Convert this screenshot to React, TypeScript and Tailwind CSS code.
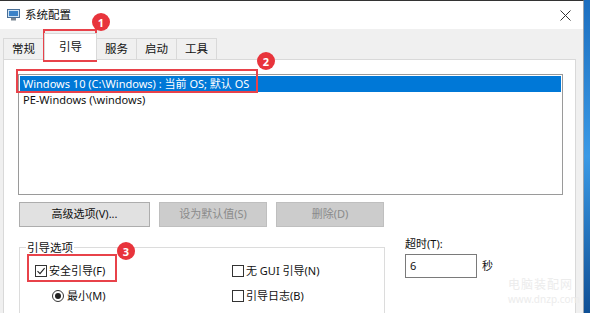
import React from "react"

const font = { fontFamily: '"Noto Sans", "Noto Sans CJK SC", sans-serif' }

const Badge = ({ n, className }: { n: string; className: string }) => (
  <div className={"absolute w-[18px] h-[18px] rounded-full bg-[#e8343c] text-white text-[11px] font-bold flex items-center justify-center leading-none " + className}>
    {n}
  </div>
)

const Check = ({ checked }: { checked?: boolean }) => (
  <div className="w-[12px] h-[12px] border border-[#333] bg-white flex items-center justify-center">
    {checked && (
      <svg width="10" height="10" viewBox="0 0 10 10">
        <path d="M1.5 5.2 L4 7.6 L8.6 2.2" fill="none" stroke="#222" strokeWidth="1.1" />
      </svg>
    )}
  </div>
)

const Radio = ({ on }: { on?: boolean }) => (
  <div className="w-[12px] h-[12px] rounded-full border border-[#333] bg-white flex items-center justify-center">
    {on && <div className="w-[6px] h-[6px] rounded-full bg-[#222]" />}
  </div>
)

const Tab = ({ label, active }: { label: string; active?: boolean }) =>
  active ? (
    <div className="h-[27px] -mb-px px-[14px] bg-white border border-b-0 border-[#d9d9d9] flex items-center text-[11.5px] text-[#111] relative z-10">
      {label}
    </div>
  ) : (
    <div className="h-[21px] px-[8px] border border-b-0 border-l-0 first:border-l border-[#d9d9d9] flex items-center text-[11.5px] text-[#111]">
      {label}
    </div>
  )

export default function App() {
  return (
    <div className="w-[590px] h-[313px] overflow-hidden relative flex bg-white text-[11px]" style={font}>
      <div className="w-[584px] flex flex-col border-t border-[#333] border-r border-r-[#9aa4b0]">
        {/* title bar */}
        <div className="h-[28px] bg-white flex items-center pl-[7px] pr-[12px] shrink-0">
          <svg width="13" height="12" viewBox="0 0 13 12">
            <rect x="0.5" y="0.5" width="12" height="8" fill="#cfe3f5" stroke="#4a6f96" />
            <rect x="2" y="2" width="9" height="5" fill="#3b82c8" />
            <rect x="4" y="9" width="5" height="2.5" fill="#7a8794" />
          </svg>
          <span className="ml-[5px] text-[11.5px] text-[#111]">系统配置</span>
          <div className="flex-1" />
          <svg width="11" height="11" viewBox="0 0 11 11">
            <path d="M0.5 0.5 L10.5 10.5 M10.5 0.5 L0.5 10.5" stroke="#333" strokeWidth="1" />
          </svg>
        </div>

        {/* body */}
        <div className="flex-1 bg-[#f0f0f0] flex flex-col pl-[3px] pr-[7px]">
          <div className="h-[30px] flex items-end shrink-0">
            <Tab label="常规" />
            <Tab label="引导" active />
            <Tab label="服务" />
            <Tab label="启动" />
            <Tab label="工具" />
          </div>
          <div className="flex-1 bg-white border border-[#d9d9d9] pl-[14px] pr-[12px] pt-[14px] flex flex-col">
            {/* list */}
            <div className="h-[121px] border border-[#9a9a9a] bg-white p-px">
              <div className="h-[16px] bg-[#0078d7] text-white flex items-center pl-[3px]">
                Windows 10 (C:\Windows) : 当前 OS; 默认 OS
              </div>
              <div className="h-[16px] text-[#111] flex items-center pl-[3px]">PE-Windows (\windows)</div>
            </div>

            {/* buttons */}
            <div className="flex gap-[9px] mt-[7px] pl-[1px]">
              <div className="w-[131px] h-[25px] bg-[#e1e1e1] border border-[#adadad] flex items-center justify-center text-[#111]">
                高级选项(V)...
              </div>
              <div className="w-[108px] h-[25px] bg-[#cccccc] border border-[#bfbfbf] flex items-center justify-center text-[#8a8a8a]">
                设为默认值(S)
              </div>
              <div className="w-[108px] h-[25px] bg-[#cccccc] border border-[#bfbfbf] flex items-center justify-center text-[#8a8a8a]">
                删除(D)
              </div>
            </div>

            <div className="flex mt-[12px] pl-[1px]">
              {/* group */}
              <fieldset className="w-[366px] h-[90px] border border-[#dcdcdc] pl-[6px] text-[#111]">
                <legend className="px-[1px] text-[11.5px]">引导选项</legend>
                <div className="flex">
                  <div className="w-[206px] flex flex-col">
                    <div className="h-[25px] flex items-center gap-[2px] pl-[9px] mt-[2px]">
                      <Check checked />
                      <span>安全引导(F)</span>
                    </div>
                    <div className="h-[25px] flex items-center gap-[3px] pl-[26px]">
                      <Radio on />
                      <span>最小(M)</span>
                    </div>
                    <div className="h-[25px] flex items-center gap-[3px] pl-[26px]">
                      <Radio />
                      <span>其他外壳(L)</span>
                    </div>
                  </div>
                  <div className="flex flex-col">
                    <div className="h-[25px] flex items-center gap-[2px] mt-[2px]">
                      <Check />
                      <span>无 GUI 引导(N)</span>
                    </div>
                    <div className="h-[25px] flex items-center gap-[2px]">
                      <Check />
                      <span>引导日志(B)</span>
                    </div>
                    <div className="h-[25px] flex items-center gap-[2px]">
                      <Check />
                      <span>基本视频(E)</span>
                    </div>
                  </div>
                </div>
              </fieldset>

              {/* timeout */}
              <div className="ml-[20px] -mt-[3px] text-[#111] flex flex-col">
                <span className="leading-[16px]">超时(T):</span>
                <div className="flex items-center mt-[2px]">
                  <div className="w-[72px] h-[24px] border border-[#7a7a7a] bg-white flex items-center pl-[4px]">6</div>
                  <span className="ml-[5px]">秒</span>
                </div>
              </div>
            </div>
          </div>
        </div>
      </div>
      <div className="flex-1 bg-gradient-to-b from-[#1c6fc0] via-[#3b9ae6] to-[#0f4f95]" />

      {/* watermark */}
      <div className="absolute left-[508px] top-[278px] text-[12px] leading-[14px] text-[#ececec] tracking-[1px]">电脑装配网</div>
      <div className="absolute left-[508px] top-[293px] text-[10px] leading-[12px] text-[#ececec]">www.dnzp.com</div>

      {/* annotations */}
      <div className="absolute left-[43px] top-[29px] w-[54px] h-[33px] border-2 border-[#e8424a]" />
      <Badge n="1" className="left-[92px] top-[13px]" />
      <div className="absolute left-[16px] top-[69px] w-[242px] h-[24px] border-2 border-[#e8424a]" />
      <Badge n="2" className="left-[257px] top-[52px]" />
      <div className="absolute left-[27px] top-[254px] w-[90px] h-[28px] border-2 border-[#e8424a]" />
      <Badge n="3" className="left-[117px] top-[242px]" />
    </div>
  )
}
